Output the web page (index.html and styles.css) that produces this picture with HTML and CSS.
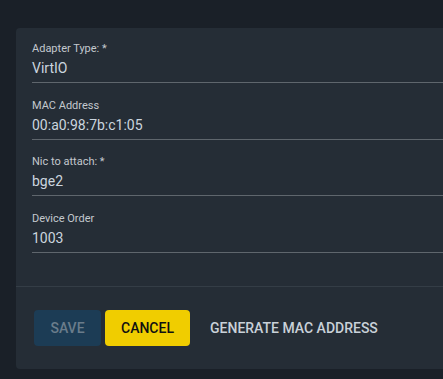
FILE: index.html
```html
<!DOCTYPE html>
<html>
<head>
<meta charset="utf-8">
<link rel="stylesheet" href="styles.css">
</head>
<body>
<div class="card">
  <div class="form">
    <div class="field">
      <div class="label">Adapter Type: *</div>
      <div class="value">VirtIO</div>
    </div>
    <div class="field">
      <div class="label">MAC Address</div>
      <div class="value">00:a0:98:7b:c1:05</div>
    </div>
    <div class="field">
      <div class="label">Nic to attach: *</div>
      <div class="value">bge2</div>
    </div>
    <div class="field">
      <div class="label">Device Order</div>
      <div class="value">1003</div>
    </div>
  </div>
  <div class="actions">
    <button class="btn btn-save">SAVE</button>
    <button class="btn btn-cancel">CANCEL</button>
    <button class="btn btn-text">GENERATE MAC ADDRESS</button>
  </div>
</div>
</body>
</html>
```

FILE: styles.css
```css
html, body {
  margin: 0;
  height: 100%;
  overflow: hidden;
}
body {
  background: #1a2028;
  font-family: Roboto, "Liberation Sans", sans-serif;
  padding: 28px 0 0 16px;
  box-sizing: border-box;
}
.card {
  width: 427px;
  height: 341px;
  background: #252d36;
  border-radius: 4px 0 0 4px;
  display: flex;
  flex-direction: column;
}
.form {
  padding: 0 0 33px 16px;
  border-bottom: 1px solid #343d46;
}
.field {
  padding: 14px 0 4px 0;
  border-bottom: 1px solid #5f666d;
}
.field + .field {
  padding-top: 15.6px;
}
.label {
  font-size: 11px;
  line-height: 14px;
  color: #c3c8ce;
  margin-bottom: 2px;
}
.value {
  font-size: 14px;
  line-height: 20px;
  color: #cbd5df;
}
.actions {
  display: flex;
  gap: 4px;
  padding: 23px 0 0 18px;
}
.btn {
  font-family: Roboto, "Liberation Sans", sans-serif;
  font-size: 14px;
  font-weight: 500;
  height: 36px;
  padding: 0 16px;
  border: none;
  border-radius: 4px;
  letter-spacing: 0;
}
.btn-save {
  background: #1c3c55;
  color: #6a7c8b;
  width: 67px;
}
.btn-cancel {
  background: #f0cd00;
  color: #111111;
  width: 85px;
}
.btn-text {
  background: transparent;
  color: #c9d1d9;
}
```
